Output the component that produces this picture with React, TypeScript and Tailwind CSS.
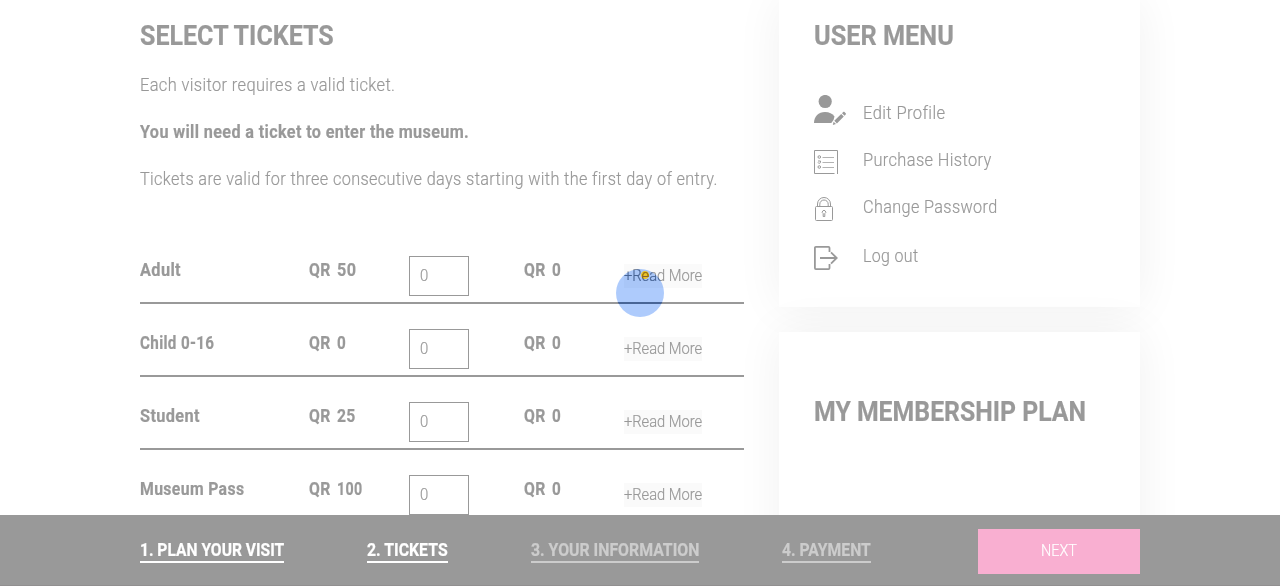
import { useLayoutEffect, useRef } from "react";

type FitProps = { text: string; width: number; className?: string };

// Condenses a line of text horizontally so that it takes exactly `width` pixels.
function Fit({ text, width, className = "" }: FitProps) {
  const ref = useRef<HTMLSpanElement>(null);
  useLayoutEffect(() => {
    const el = ref.current;
    if (!el) return;
    // The spacing after the last letter is not part of the visible line.
    const trailing = parseFloat(getComputedStyle(el).letterSpacing) || 0;
    el.style.transform = `scaleX(${width / (el.offsetWidth - trailing)})`;
  }, [text, width]);
  return (
    <span className={`block whitespace-nowrap ${className}`} style={{ width }}>
      <span ref={ref} className="inline-block origin-left">
        {text}
      </span>
    </span>
  );
}

const tickets = [
  { name: "Adult", nameW: 40.5, price: "50", priceW: 18.5 },
  { name: "Child 0-16", nameW: 74, price: "0", priceW: 9 },
  { name: "Student", nameW: 59.5, price: "25", priceW: 18 },
  { name: "Museum Pass", nameW: 104, price: "100", priceW: 25 },
];

function ProfileIcon() {
  return (
    <svg width="33" height="31" viewBox="0 0 33 31" fill="#999">
      <circle cx="11.2" cy="6.5" r="6.6" />
      <path d="M0 28C0 21.500 4.500 17 11 17c4.200 0 7.500 1.500 9.500 4.500L19.500 25l-2.200 3Z" />
      <path d="m20.300 25.800 6.900-6.800 2.600 2.600-6.900 6.800ZM28 18.200l1.200-1.100c.4-.4.9-.4 1.300 0l1.200 1.200c.4.400.4.800 0 1.200l-1.100 1.300ZM19.600 26.700l2.400 2.400-3.200.9Z" />
    </svg>
  );
}

function HistoryIcon() {
  return (
    <svg width="24" height="24" viewBox="0 0 24 24" fill="none" stroke="#999">
      <path d="M20.500 23.500H.5V.5h23V24" />
      <path d="M8.500 7.500H20M8.500 12.500H20M8.500 17.500H20" strokeOpacity=".75" />
      <circle cx="5.300" cy="7" r="1.300" />
      <path d="M4 11h2.500v1.500c0 1-2.500 1-2.500 0" />
      <circle cx="5.300" cy="17" r="1.300" />
    </svg>
  );
}

function LockIcon() {
  return (
    <svg width="24" height="24" viewBox="0 0 24 24" fill="none" stroke="#999">
      <rect x="1.500" y="9.500" width="17" height="14" rx="1" />
      <path d="M3.500 9.500V7a6.500 6.500 0 0 1 13 0v2.500M5.800 9.500V7.200a4.200 4.200 0 0 1 8.400 0v2.300" />
      <path d="M9.200 16.600a1.700 1.700 0 1 1 1.600 0v2.900H9.200Z" />
    </svg>
  );
}

function LogoutIcon() {
  return (
    <svg width="24" height="24" viewBox="0 0 24 24" fill="none" stroke="#999" strokeWidth="1.800">
      <path d="M15.500 6V1.800a1 1 0 0 0-1-.9H1.900a1 1 0 0 0-1 1v20.200a1 1 0 0 0 1 1h12.600a1 1 0 0 0 1-.9V18" />
      <path d="M6 12h16.500M17 6.300l5.700 5.700-5.700 5.700" />
    </svg>
  );
}

const menu = [
  { label: "Edit Profile", w: 82.5, icon: <ProfileIcon />, row: "h-[47px]", pad: "pt-0" },
  { label: "Purchase History", w: 128, icon: <HistoryIcon />, row: "h-[47px]", pad: "pt-[8px]" },
  { label: "Change Password", w: 134, icon: <LockIcon />, row: "h-[49px]", pad: "pt-[8px]" },
  { label: "Log out", w: 55.5, icon: <LogoutIcon />, row: "h-[47px]", pad: "pt-[8px]" },
];

const steps = [
  { label: "1. PLAN YOUR VISIT", w: 144, active: true },
  { label: "2. TICKETS", w: 81, active: true },
  { label: "3. YOUR INFORMATION", w: 168, active: false },
  { label: "4. PAYMENT", w: 89, active: false },
];

export default function App() {
  return (
    <div className="relative isolate flex h-[586px] w-full flex-col overflow-hidden bg-white font-[Roboto,'Liberation_Sans',sans-serif] text-lg leading-6 font-light tracking-[0.4px] text-[#999] [-webkit-text-stroke:0.2px]">
      <main className="mx-auto flex h-[515px] w-[1000px] shrink-0 gap-[35px]">
        <section className="w-[604px] shrink-0">
          <h1 className="pt-[20px] text-[28px] leading-8 font-bold tracking-normal">
            <Fit text="SELECT TICKETS" width={194} />
          </h1>
          <div className="flex flex-col gap-[23px] pt-[21px]">
            <Fit text="Each visitor requires a valid ticket." width={255} />
            <Fit text="You will need a ticket to enter the museum." width={329} className="font-bold" />
            <Fit text="Tickets are valid for three consecutive days starting with the first day of entry." width={577} />
          </div>
          <div className="pt-[40px]">
            {tickets.map((t) => (
              <div key={t.name} className="flex h-[73px] items-start border-b-2 border-[#999] pt-[25px] font-bold">
                <div className="w-[169px] pt-[2px]">
                  <Fit text={t.name} width={t.nameW} />
                </div>
                <div className="flex w-[100px] gap-[6px] pt-[2px]">
                  <Fit text="QR" width={21.5} />
                  <Fit text={t.price} width={t.priceW} />
                </div>
                <div className="flex h-10 w-[60px] items-center border border-[#999] pl-[10px] text-base font-light">
                  <Fit text="0" width={8} />
                </div>
                <div className="ml-[55px] flex w-[100px] gap-[6px] pt-[2px]">
                  <Fit text="QR" width={21.5} />
                  <Fit text="0" width={9} />
                </div>
                <div className="mt-[8px] bg-[#fafafa] text-base leading-6 font-light tracking-normal">
                  <Fit text="+Read More" width={78} />
                </div>
              </div>
            ))}
          </div>
        </section>

        <aside className="flex w-[361px] shrink-0 flex-col gap-[25px]">
          <div className="h-[307px] shrink-0 bg-white pl-[35px] shadow-[0_0_45px_rgba(0,0,0,0.06)]">
            <h2 className="pt-[20px] text-[28px] leading-8 font-bold tracking-normal">
              <Fit text="USER MENU" width={140} />
            </h2>
            <ul className="pt-[43px]">
              {menu.map((m) => (
                <li key={m.label} className={`flex ${m.row}`}>
                  <span className={`w-[49px] shrink-0 ${m.pad}`}>{m.icon}</span>
                  <span className="pt-[6px]">
                    <Fit text={m.label} width={m.w} />
                  </span>
                </li>
              ))}
            </ul>
          </div>
          <div className="h-[300px] shrink-0 bg-white pl-[35px] shadow-[0_0_45px_rgba(0,0,0,0.06)]">
            <h2 className="pt-[64px] text-[28px] leading-8 font-bold tracking-normal">
              <Fit text="MY MEMBERSHIP PLAN" width={272} />
            </h2>
          </div>
        </aside>
      </main>

      <footer className="relative flex h-[71px] w-full shrink-0 justify-center border-b border-[#918f90] bg-[#999]">
        <div className="flex w-[1000px] items-start justify-between pt-[14px]">
          <nav className="flex gap-[83px] pt-[10px] leading-[22px] font-bold tracking-normal">
            {steps.map((s) => (
              <a
                key={s.label}
                className={s.active ? "border-b-2 border-white text-white" : "border-b-2 border-[#ccc] text-[#ccc]"}
              >
                <Fit text={s.label} width={s.w} />
              </a>
            ))}
          </nav>
          <button className="flex h-[45px] w-[162px] items-center justify-center bg-[#f9afd1] pb-[2px] text-base tracking-normal text-white">
            <Fit text="NEXT" width={36} />
          </button>
        </div>
      </footer>

      <div className="absolute top-[269px] left-[616px] size-12 rounded-full bg-[radial-gradient(circle_at_29px_6px,#1138cd_3.500px,#513403_4.500px)] mix-blend-difference" />
    </div>
  );
}
